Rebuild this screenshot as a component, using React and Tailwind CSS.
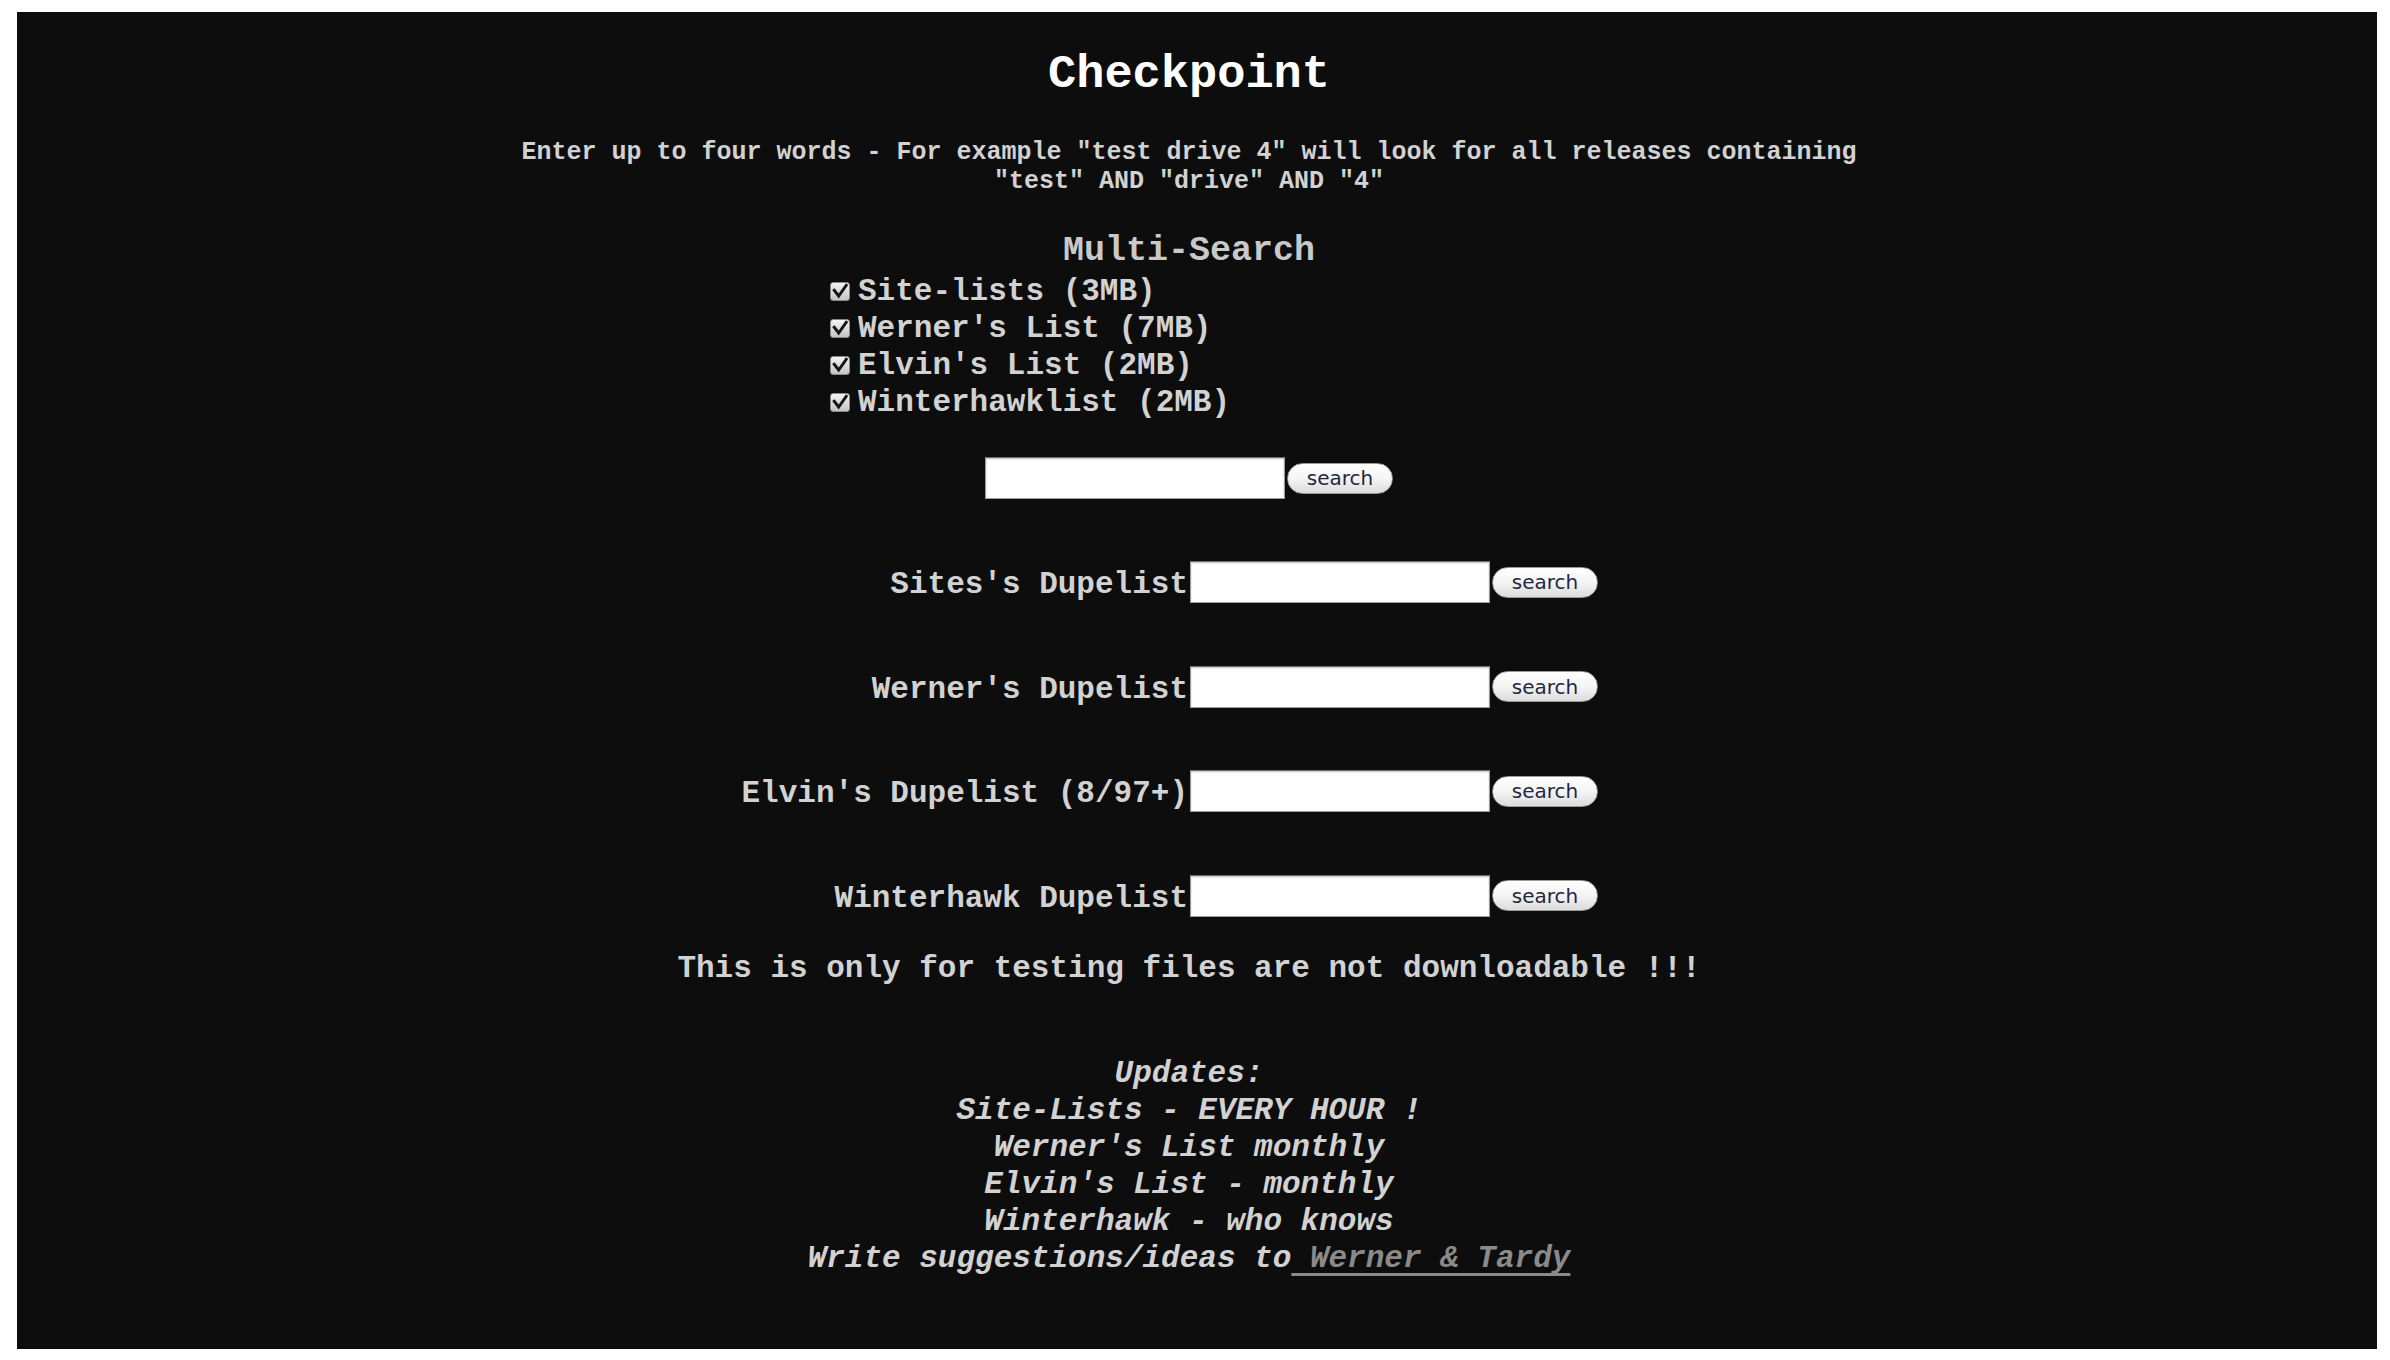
// Checkpoint – dupe list search page
import React from 'react';

const mono = { fontFamily: '"Liberation Mono", "Courier New", monospace' };

function CheckBox() {
  return (
    <span className="inline-flex items-center justify-center w-[20px] h-[19px] rounded-[3px] border border-[#8a8a8a] bg-linear-to-b from-[#f4f4f4] to-[#c4c4c4] mr-[8px] shrink-0">
      <svg viewBox="0 0 20 19" className="w-[18px] h-[17px]">
        <path d="M3.5 8 L8.5 14.5 L17 2.5" fill="none" stroke="#151515" strokeWidth="3.2" strokeLinecap="square" />
      </svg>
    </span>
  );
}

function SearchField({ ml = '' }) {
  return (
    <div className={`flex items-center ${ml}`}>
      <input
        type="text"
        className="w-[300px] h-[42px] bg-white border border-[#9c9c9c] border-t-[#6c6c6c] shadow-[inset_0_1px_2px_rgba(0,0,0,0.25)] outline-none"
      />
      <button
        className="ml-[2px] w-[106px] h-[31px] rounded-full border border-[#9a9a9a] bg-linear-to-b from-white via-[#f4f4f4] to-[#dcdcdc] text-[#1f2744] text-[20px] leading-none font-normal"
        style={{ fontFamily: '"DejaVu Sans", "Open Sans", sans-serif' }}
      >
        search
      </button>
    </div>
  );
}

const lists = ['Site-lists (3MB)', "Werner's List (7MB)", "Elvin's List (2MB)", 'Winterhawklist (2MB)'];
const dupes = ["Sites's Dupelist", "Werner's Dupelist", "Elvin's Dupelist (8/97+)", 'Winterhawk Dupelist'];

export default function App() {
  return (
    <div className="w-full h-[1360px] bg-white pt-[12px] pb-[11px] pl-[17px] pr-[13px]">
      <div className="h-full flow-root bg-[#0d0d0d] pr-[16px] text-[#d2d2d2] font-bold" style={mono}>
        {/* Title */}
        <h1 className="mt-[36px] h-[54px] leading-[54px] text-center text-[47px] text-white font-bold">
          Checkpoint
        </h1>

        <p className="mt-[36px] text-center text-[25px] leading-[29px]">
          Enter up to four words - For example "test drive 4" will look for all releases containing
          <br />
          "test" AND "drive" AND "4"
        </p>

        {/* Multi search */}
        <h3 className="mt-[35px] h-[40px] leading-[40px] text-center text-[35px] text-[#c9c9c9]">
          Multi-Search
        </h3>
        <div className="flex justify-center mt-[2px]">
          <div className="w-[718px] flex flex-col">
            {lists.map(l => (
              <label key={l} className="flex items-center h-[37px] text-[31px] leading-[37px]">
                <CheckBox />
                {l}
              </label>
            ))}
          </div>
        </div>

        <div className="flex justify-center mt-[36px]">
          <SearchField />
        </div>

        {/* Dupelists */}
        <div className="mt-[62px] flex flex-col gap-[62.5px]">
          {dupes.map(d => (
            <div key={d} className="grid grid-cols-2 items-center h-[42px]">
              <div className="text-right pr-[1px] pt-[5px] text-[31px] leading-[37px] whitespace-pre">{d}</div>
              <SearchField ml="ml-[1px]" />
            </div>
          ))}
        </div>

        <p className="mt-[33px] text-center text-[31px] leading-[37px]">
          This is only for testing files are not downloadable !!!
        </p>

        {/* Updates */}
        <div className="mt-[68px] text-center text-[31px] leading-[37px] italic">
          <div>Updates:</div>
          <div>Site-Lists - EVERY HOUR !</div>
          <div>Werner's List monthly</div>
          <div>Elvin's List - monthly</div>
          <div>Winterhawk - who knows</div>
          <div>
            Write suggestions/ideas to<a href="#" className="text-[#8a8a8a] underline underline-offset-[6px] decoration-[3px] [text-decoration-skip-ink:none]"> Werner &amp; Tardy</a>
          </div>
        </div>
      </div>
    </div>
  );
}
